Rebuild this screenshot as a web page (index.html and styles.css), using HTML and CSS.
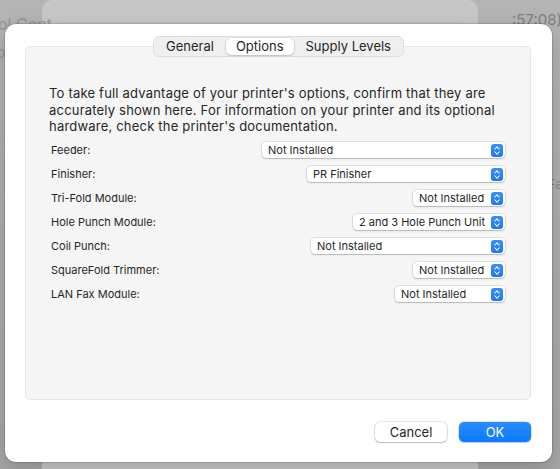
FILE: index.html
```html
<!DOCTYPE html>
<html>
<head>
<meta charset="utf-8">
<link rel="stylesheet" href="styles.css">
</head>
<body>
<div class="desktop">
  <div class="bg-window"><div class="bg-toolbar-line"></div></div>
  <div class="bg-text bg-t1">ol Cont</div>
  <div class="bg-text bg-t2">:57:08)</div>
  <div class="bg-text bg-t3">o</div>
  <div class="bg-text bg-t4">Fa</div>

  <div class="sheet">
    <div class="tabs">
      <div class="tab">General</div>
      <div class="tab active">Options</div>
      <div class="tab">Supply Levels</div>
    </div>
    <div class="box">
      <p class="intro">To take full advantage of your printer's options, confirm that they are accurately shown here. For information on your printer and its optional hardware, check the printer's documentation.</p>
      <div class="rows">
        <div class="row"><span class="label">Feeder:</span><div class="popup" style="width:243px"><span>Not Installed</span><i class="step"></i></div></div>
        <div class="row"><span class="label">Finisher:</span><div class="popup" style="width:198px"><span>PR Finisher</span><i class="step"></i></div></div>
        <div class="row"><span class="label">Tri-Fold Module:</span><div class="popup" style="width:92px"><span>Not Installed</span><i class="step"></i></div></div>
        <div class="row"><span class="label">Hole Punch Module:</span><div class="popup" style="width:152px"><span>2 and 3 Hole Punch Unit</span><i class="step"></i></div></div>
        <div class="row"><span class="label">Coil Punch:</span><div class="popup" style="width:194px"><span>Not Installed</span><i class="step"></i></div></div>
        <div class="row"><span class="label">SquareFold Trimmer:</span><div class="popup" style="width:92px"><span>Not Installed</span><i class="step"></i></div></div>
        <div class="row"><span class="label">LAN Fax Module:</span><div class="popup" style="width:110px"><span>Not Installed</span><i class="step"></i></div></div>
      </div>
    </div>
    <div class="buttons">
      <div class="btn">Cancel</div>
      <div class="btn primary">OK</div>
    </div>
  </div>
</div>
</body>
</html>
```
FILE: styles.css
```css
html, body {
  margin: 0;
  padding: 0;
}
body {
  width: 560px;
  height: 469px;
  overflow: hidden;
  background: #a9a9a9;
  font-family: "Inter", "Liberation Sans", sans-serif;
  -webkit-font-smoothing: antialiased;
}
.desktop {
  position: relative;
  width: 560px;
  height: 469px;
  background: linear-gradient(#b4b4b4, #a6a6a6);
}
.bg-window {
  position: absolute;
  left: 42px;
  top: 0;
  width: 436px;
  height: 480px;
  background: #c6c6c6;
  border-radius: 10px;
}
.bg-toolbar-line {
  margin: 22px 18px 0 18px;
  border-top: 1px solid #bcbcbc;
}
.bg-text {
  position: absolute;
  color: #8a8a8a;
  font-size: 16px;
  opacity: 0.7;
}
.bg-t1 { left: -2px; top: 14px; }
.bg-t2 { left: 512px; top: 10px; font-size: 15px; color: #6a6a6a; }
.bg-t3 { left: -4px; top: 42px; }
.bg-t4 { left: 548px; top: 176px; font-size: 13px; color: #777; }

.sheet {
  position: absolute;
  left: 5px;
  top: 24px;
  width: 547px;
  height: 438px;
  box-sizing: border-box;
  background: #ffffff;
  border-radius: 11px;
  box-shadow: 0 0 0 0.5px rgba(0,0,0,0.25), 0 6px 18px rgba(0,0,0,0.18);
  padding: 12px 21px 20px 20px;
  display: flex;
  flex-direction: column;
}
.tabs {
  align-self: center;
  position: relative;
  z-index: 1;
  display: flex;
  height: 21px;
  box-sizing: border-box;
  padding: 1px;
  background: #efefef;
  border: 1px solid #dedede;
  border-radius: 6px;
  font-size: 13px;
  color: #262626;
  margin-left: 1px;
}
.tab {
  display: flex;
  align-items: center;
  padding: 0 11px;
  border-radius: 5px;
  line-height: 17px;
}
.tab.active {
  background: #fff;
  box-shadow: 0 0 0 0.5px rgba(0,0,0,0.12), 0 1px 2px rgba(0,0,0,0.15);
  padding: 0 10px;
  margin: 0 1px;
}
.box {
  margin-top: -11px;
  height: 354px;
  box-sizing: border-box;
  background: #f5f5f5;
  border: 1px solid #e6e6e6;
  border-radius: 5px;
  padding: 38px 25px 0 23px;
}
.intro {
  margin: 0;
  font-size: 13px;
  letter-spacing: 0.2px;
  line-height: 16.5px;
  color: #262626;
}
.rows {
  margin-top: 3.5px;
  display: flex;
  flex-direction: column;
}
.row {
  height: 24px;
  display: flex;
  align-items: center;
  justify-content: space-between;
}
.label {
  font-size: 11px;
  color: #262626;
  padding-left: 2px;
}
.popup {
  height: 16px;
  box-sizing: border-box;
  background: #fff;
  border-radius: 4px;
  box-shadow: 0 0 0 0.5px rgba(0,0,0,0.18), 0 1px 1.5px rgba(0,0,0,0.18);
  display: flex;
  align-items: center;
  justify-content: space-between;
  padding: 0 2px 0 6px;
  font-size: 11px;
  color: #262626;
}
.step {
  width: 12px;
  height: 13px;
  border-radius: 3px;
  background: linear-gradient(#3b8ef8, #1a78f2);
  position: relative;
}
.step::before, .step::after {
  content: "";
  position: absolute;
  left: 4px;
  width: 3px;
  height: 3px;
  border-left: 1.2px solid #fff;
  border-top: 1.2px solid #fff;
}
.step::before {
  top: 3px;
  transform: rotate(45deg);
}
.step::after {
  top: 6px;
  transform: rotate(225deg);
}
.buttons {
  margin-top: auto;
  display: flex;
  justify-content: flex-end;
  gap: 12px;
}
.btn {
  width: 72px;
  height: 20px;
  box-sizing: border-box;
  border-radius: 5px;
  display: flex;
  align-items: center;
  justify-content: center;
  font-size: 13px;
  color: #262626;
  background: #fff;
  box-shadow: 0 0 0 0.5px rgba(0,0,0,0.2), 0 1px 1.5px rgba(0,0,0,0.2);
}
.btn.primary {
  color: #fff;
  background: linear-gradient(#2a8bff, #0b7bff);
  box-shadow: 0 0 0 0.5px rgba(0,90,200,0.3), 0 1px 1.5px rgba(0,0,0,0.15);
}
```
